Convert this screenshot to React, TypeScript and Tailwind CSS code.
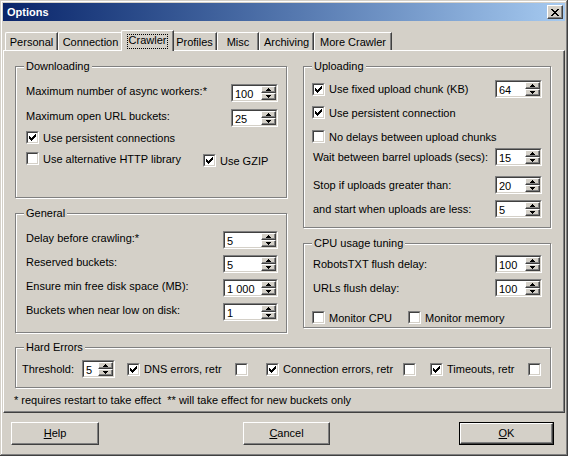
import React from 'react'

const FACE = 'bg-[#d4d0c8]'
const SUNKEN = 'border border-t-[#808080] border-l-[#808080] border-r-white border-b-white'
const SUNKEN_IN = 'border border-t-[#404040] border-l-[#404040] border-r-[#d4d0c8] border-b-[#d4d0c8]'
const RAISED = 'border border-t-white border-l-white border-r-[#404040] border-b-[#404040] shadow-[inset_-1px_-1px_0_#808080]'

function Check({ on }: { on?: boolean }) {
  return (
    <span className={`flex w-[13px] h-[13px] shrink-0 ${SUNKEN}`}>
      <span className={`flex flex-1 items-center justify-center bg-white ${SUNKEN_IN}`}>
        {on && (
          <svg width="7" height="7" viewBox="0 0 7 7" shapeRendering="crispEdges">
            <polygon points="0,2 2,4 6,0 7,0 7,3 2,7 0,5" fill="#000" />
          </svg>
        )}
      </span>
    </span>
  )
}

function Arrow({ down }: { down?: boolean }) {
  return (
    <svg width="5" height="3" viewBox="0 0 5 3" shapeRendering="crispEdges">
      <polygon points={down ? '0,0 5,0 2.5,3' : '0,3 5,3 2.5,0'} fill="#000" />
    </svg>
  )
}

function Spin({ v, w }: { v: string; w: string }) {
  return (
    <div className={`flex h-[18px] shrink-0 ${w} ${SUNKEN}`}>
      <div className={`flex flex-1 bg-white ${SUNKEN_IN}`}>
        <span className="flex-1 pl-[2px] pt-[1px] leading-[14px] text-[11px] whitespace-nowrap overflow-hidden">{v}</span>
        <div className="flex flex-col w-[15px]">
          <div className={`flex flex-1 items-center justify-center ${FACE} ${RAISED}`}><Arrow /></div>
          <div className={`flex flex-1 items-center justify-center ${FACE} ${RAISED}`}><Arrow down /></div>
        </div>
      </div>
    </div>
  )
}

function Group({ title, className, children }: { title: string; className: string; children: React.ReactNode }) {
  return (
    <div className={`relative shrink-0 border border-[#808080] shadow-[inset_1px_1px_0_#fff,1px_1px_0_#fff] ${className}`}>
      <span className={`absolute -top-[8px] left-[8px] px-[2px] leading-[14px] whitespace-nowrap ${FACE}`}>{title}</span>
      {children}
    </div>
  )
}

function SpinRow({ label, v, w, top = false }: { label: string; v: string; w: string; top?: boolean }) {
  return (
    <div className={`flex justify-between h-[18px] ${top ? 'items-start' : 'items-center'}`}>
      <span className="leading-[14px] whitespace-nowrap">{label}</span>
      <Spin v={v} w={w} />
    </div>
  )
}

function CheckRow({ label, on, className = '' }: { label: string; on?: boolean; className?: string }) {
  return (
    <div className={`flex items-center gap-[4px] h-[13px] ${className}`}>
      <Check on={on} />
      <span className="leading-[14px] whitespace-nowrap">{label}</span>
    </div>
  )
}

function Button({ children, def = false, className = '' }: { children: React.ReactNode; def?: boolean; className?: string }) {
  if (def) {
    return (
      <div className={`h-[23px] border border-black flex ${className}`}>
        <div className={`flex flex-1 items-center justify-center ${RAISED}`}>{children}</div>
      </div>
    )
  }
  return <div className={`h-[23px] flex items-center justify-center ${RAISED} ${className}`}>{children}</div>
}

const TABS = [
  { name: 'Personal', w: 'w-[53px]' },
  { name: 'Connection', w: 'w-[65px]' },
  { name: 'Crawler', w: 'w-[53px]', sel: true },
  { name: 'Profiles', w: 'w-[45px]' },
  { name: 'Misc', w: 'w-[42px]' },
  { name: 'Archiving', w: 'w-[55px]' },
  { name: 'More Crawler', w: 'w-[78px]' },
]

export default function App() {
  return (
    <div className={`w-[568px] h-[456px] ${FACE} p-[3px] flex flex-col text-[11px] text-black font-['Liberation_Sans',Arial,sans-serif] shadow-[inset_-1px_-1px_0_#404040,inset_1px_1px_0_#d4d0c8,inset_-2px_-2px_0_#808080,inset_2px_2px_0_#ffffff]`}>
      {/* title bar */}
      <div className="h-[18px] shrink-0 flex items-center justify-between pl-[4px] pr-[2px] bg-gradient-to-r from-[#0a246a] to-[#a6caf0]">
        <span className="text-white font-bold leading-none">Options</span>
        <div className={`w-[16px] h-[14px] flex items-center justify-center ${FACE} ${RAISED}`}>
          <svg width="8" height="7" viewBox="0 0 8 7" shapeRendering="crispEdges">
            <path d="M0 0h2l2 2.2 2-2.2h2l-3 3.5 3 3.5h-2l-2-2.2-2 2.2h-2l3-3.5z" fill="#000" />
          </svg>
        </div>
      </div>

      {/* tabs */}
      <div className="mt-[9px] h-[20px] shrink-0 flex items-end pl-[2px]">
        {TABS.map(t =>
          t.sel ? (
            <div key={t.name} className={`relative z-10 -mx-[2px] -mb-[1px] h-[21px] ${t.w} ${FACE} flex justify-center pt-[3px] border-t border-l border-t-white border-l-white border-r border-r-[#404040] shadow-[inset_-1px_0_0_#808080] rounded-tl-[2px]`}>
              <span className="h-[15px] leading-[13px] px-[2px] outline outline-1 outline-dotted outline-black -outline-offset-1">{t.name}</span>
            </div>
          ) : (
            <div key={t.name} className={`h-[18px] ${t.w} flex justify-center pt-[2px] border-t border-l border-t-white border-l-white border-r border-r-[#404040] shadow-[inset_-1px_0_0_#808080] rounded-tl-[2px]`}>
              <span className="leading-[14px]">{t.name}</span>
            </div>
          )
        )}
      </div>

      {/* panel */}
      <div className="h-[363px] shrink-0 flex flex-col pt-[15px] pl-[11px] border border-t-white border-l-white border-r-[#404040] border-b-[#404040] shadow-[inset_-1px_-1px_0_#808080]">
        <div className="flex gap-[16px]">
          <div className="w-[272px] flex flex-col gap-[15px]">
            <Group title="Downloading" className="h-[132px]">
              <div className="pt-[17px] pl-[10px] pr-[8px] flex flex-col">
                <SpinRow top label="Maximum number of async workers:*" v="100" w="w-[47px]" />
                <div className="mt-[7px]"><SpinRow top label="Maximum open URL buckets:" v="25" w="w-[47px]" /></div>
                <CheckRow className="mt-[4px]" on label="Use persistent connections" />
                <div className="mt-[8px] flex items-start">
                  <div className="w-[177px]"><CheckRow label="Use alternative HTTP library" /></div>
                  <CheckRow className="mt-[2px]" on label="Use GZIP" />
                </div>
              </div>
            </Group>
            <Group title="General" className="h-[120px]">
              <div className="pt-[17px] pl-[10px] pr-[8px] flex flex-col gap-[6px]">
                <SpinRow top label="Delay before crawling:*" v="5" w="w-[55px]" />
                <SpinRow top label="Reserved buckets:" v="5" w="w-[55px]" />
                <SpinRow top label="Ensure min free disk space (MB):" v="1 000" w="w-[55px]" />
                <SpinRow top label="Buckets when near low on disk:" v="1" w="w-[55px]" />
              </div>
            </Group>
          </div>

          <div className="w-[248px] flex flex-col gap-[15px]">
            <Group title="Uploading" className="h-[162px]">
              <div className="pt-[13px] pl-[8px] pr-[8px] flex flex-col">
                <div className="flex items-center justify-between h-[18px]">
                  <CheckRow on label="Use fixed upload chunk (KB)" />
                  <Spin v="64" w="w-[47px]" />
                </div>
                <CheckRow className="mt-[8px]" on label="Use persistent connection" />
                <CheckRow className="mt-[11px]" label="No delays between upload chunks" />
                <div className="mt-[5px] pl-[1px]"><SpinRow label="Wait between barrel uploads (secs):" v="15" w="w-[47px]" /></div>
                <div className="mt-[10px] pl-[1px]"><SpinRow label="Stop if uploads greater than:" v="20" w="w-[47px]" /></div>
                <div className="mt-[6px] pl-[1px]"><SpinRow label="and start when uploads are less:" v="5" w="w-[47px]" /></div>
              </div>
            </Group>
            <Group title="CPU usage tuning" className="h-[85px]">
              <div className="pt-[11px] pl-[8px] pr-[8px] flex flex-col">
                <div className="pl-[1px]"><SpinRow label="RobotsTXT flush delay:" v="100" w="w-[47px]" /></div>
                <div className="mt-[6px] pl-[1px]"><SpinRow label="URLs flush delay:" v="100" w="w-[47px]" /></div>
                <div className="mt-[14px] flex items-center">
                  <div className="w-[96px]"><CheckRow label="Monitor CPU" /></div>
                  <CheckRow label="Monitor memory" />
                </div>
              </div>
            </Group>
          </div>
        </div>

        <Group title="Hard Errors" className="mt-[14px] w-[536px] h-[41px]">
          <div className="pt-[12px] pl-[6px] flex items-center h-[30px]">
            <span className="w-[60px] leading-[14px] whitespace-nowrap">Threshold:</span>
            <Spin v="5" w="w-[33px]" />
            <div className="ml-[12px] flex items-center gap-[4px]">
              <Check on />
              <span className="w-[91px] leading-[14px] whitespace-nowrap">DNS errors, retr</span>
            </div>
            <Check />
            <div className="ml-[18px] flex items-center gap-[4px]">
              <Check on />
              <span className="w-[120px] leading-[14px] whitespace-nowrap">Connection errors, retr</span>
            </div>
            <Check />
            <div className="ml-[14px] flex items-center gap-[4px]">
              <Check on />
              <span className="w-[81px] leading-[14px] whitespace-nowrap">Timeouts, retr</span>
            </div>
            <Check />
          </div>
        </Group>

        <p className="mt-[5px] -ml-[1px] leading-[14px] whitespace-pre">* requires restart to take effect  ** will take effect for new buckets only</p>
      </div>

      {/* buttons */}
      <div className="mt-[9px] flex">
        <Button className="ml-[8px] w-[88px]"><span><span className="underline">H</span>elp</span></Button>
        <Button className="ml-[144px] w-[87px]"><span><span className="underline">C</span>ancel</span></Button>
        <Button def className="ml-[129px] w-[95px]"><span><span className="underline">O</span>K</span></Button>
      </div>
    </div>
  )
}
